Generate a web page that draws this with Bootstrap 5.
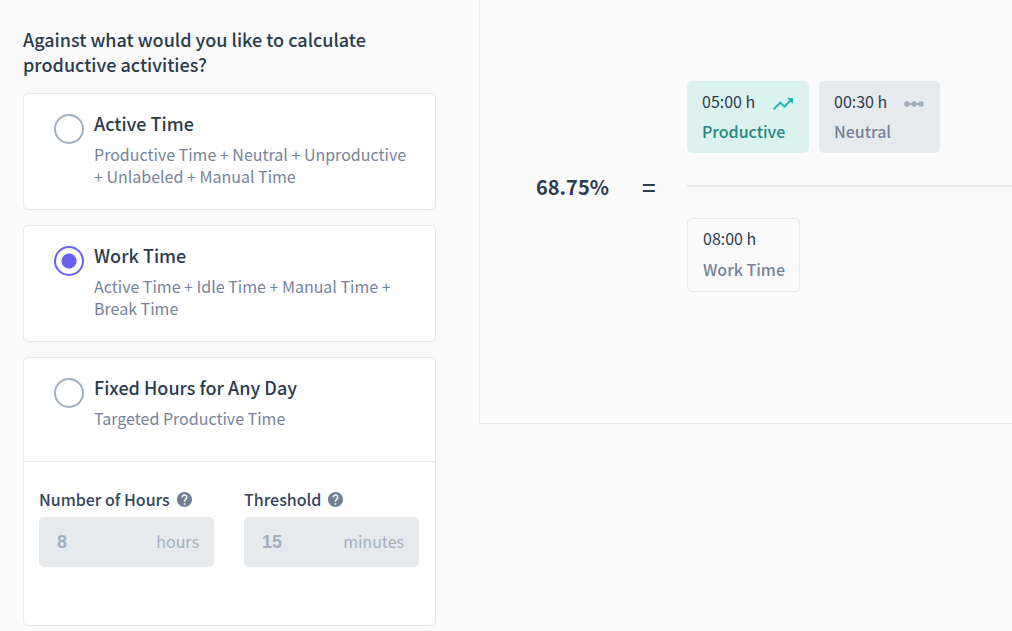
<!DOCTYPE html>
<html lang="en">
<head>
<meta charset="utf-8">
<meta name="viewport" content="width=device-width, initial-scale=1">
<title>Productivity calculation</title>
<link href="https://cdn.jsdelivr.net/npm/bootstrap@5.3.0/dist/css/bootstrap.min.css" rel="stylesheet">
<style>
  body { background: #fafafa; color: #2b3c4d; font-family: "Noto Sans CJK SC", "Noto Sans", sans-serif; font-size: 16px; line-height: 22px; }
  .calc-layout { display: grid; grid-template-columns: 479fr 533fr; align-items: start; }
  .options { padding: 27px 43px 4px 23px; }
  .question { font-size: 18px; line-height: 25px; font-weight: 500; margin-bottom: 16px; }
  .option { border: 1px solid #e6e7e9; border-radius: 5px; background: #fff; margin-bottom: 15px; }
  .option-head { padding: 17px 24px 22px 30px; gap: 10px; }
  .option-head-tall { padding-bottom: 32px; }
  .option-title { font-size: 18px; line-height: 25px; font-weight: 500; margin-bottom: 7px; }
  .option-text { color: #77839a; }
  .option .form-check-input { width: 30px; height: 30px; margin: 3px 0 0; border: 2px solid #a3aebc; background-color: #fff; }
  .option .form-check-input:checked { border-color: #6a60ef; background-image: radial-gradient(circle, #6a60ef 7px, transparent 8px); background-size: auto; }
  .fixed-fields { border-top: 1px solid #e6e7e9; padding: 26px 16px 58px 15px; gap: 30px; }
  .fixed-fields label { font-weight: 500; color: #35455c; }
  .field-label { gap: 7px; }
  .amount { border-radius: 5px; background: #e6eaed; color: #a3aebc; height: 50px; padding: 0 15px 2px 18px; margin-top: 7px; }
  .amount input { min-width: 0; width: 50%; padding: 2px 0 0; border: 0; background: none; color: #a3aebc; font: 700 18px/25px "Liberation Sans", sans-serif; }
  .formula { border-left: 1px solid #e6e7e9; border-bottom: 1px solid #e6e7e9; padding: 81px 0 131px 56px; overflow: hidden; }
  .percent { font-size: 20px; line-height: 25px; font-weight: 700; width: 106px; }
  .equals { font-size: 24px; line-height: 25px; font-weight: 500; width: 45px; }
  .tiles { gap: 10px; }
  .tile { border-radius: 5px; padding: 9px 15px 11px; white-space: nowrap; }
  .tile svg { margin: 5px 1px 0 0; }
  .tile-name { font-weight: 500; margin-top: 8px; }
  .tile-teal { background: #dcf2ef; width: 122px; }
  .tile-teal .tile-name { color: #26877f; }
  .tile-gray { background: #e6eaed; width: 121px; }
  .tile-gray .tile-name, .tile-line .tile-name { color: #77839a; }
  .tile-line { border: 1px solid #e6e7e9; width: 113px; padding-top: 8px; }
  .tile-line .tile-name { margin-top: 9px; }
  .divider { height: 2px; background: #e6eaed; margin: 32px 0 31px; }
</style>
</head>
<body>
<main class="calc-layout">
  <form class="options">
    <h1 class="question">Against what would you like to calculate productive activities?</h1>
    <section class="option">
      <div class="option-head d-flex align-items-start">
        <input class="form-check-input flex-shrink-0" type="radio" name="basis" id="active">
        <label for="active"><span class="option-title d-block">Active Time</span><span class="option-text d-block">Productive Time + Neutral + Unproductive + Unlabeled + Manual Time</span></label>
      </div>
    </section>
    <section class="option">
      <div class="option-head d-flex align-items-start">
        <input class="form-check-input flex-shrink-0" type="radio" name="basis" id="work" checked>
        <label for="work"><span class="option-title d-block">Work Time</span><span class="option-text d-block">Active Time + Idle Time + Manual Time + Break Time</span></label>
      </div>
    </section>
    <section class="option mb-0">
      <div class="option-head option-head-tall d-flex align-items-start">
        <input class="form-check-input flex-shrink-0" type="radio" name="basis" id="fixed">
        <label for="fixed"><span class="option-title d-block">Fixed Hours for Any Day</span><span class="option-text d-block">Targeted Productive Time</span></label>
      </div>
      <div class="fixed-fields d-flex">
        <div class="flex-fill w-50">
          <div class="field-label d-flex align-items-center"><label for="hours">Number of Hours</label>
            <svg width="15" height="15" viewBox="2 2 20 20" fill="#728096" aria-hidden="true"><path d="M12 2C6.48 2 2 6.48 2 12s4.480 10 10 10 10-4.480 10-10S17.520 2 12 2zm1 17h-2v-2h2v2zm2.070-7.750l-.9.920C13.450 12.900 13 13.500 13 15h-2v-.5c0-1.100.45-2.100 1.170-2.830l1.240-1.260c.37-.36.59-.86.59-1.410 0-1.100-.9-2-2-2s-2 .9-2 2H8c0-2.210 1.790-4 4-4s4 1.790 4 4c0 .88-.36 1.680-.93 2.250z"/></svg></div>
          <div class="amount d-flex align-items-center justify-content-between"><input id="hours" type="text" value="8" disabled><span>hours</span></div>
        </div>
        <div class="flex-fill w-50">
          <div class="field-label d-flex align-items-center"><label for="threshold">Threshold</label>
            <svg width="15" height="15" viewBox="2 2 20 20" fill="#728096" aria-hidden="true"><path d="M12 2C6.48 2 2 6.48 2 12s4.480 10 10 10 10-4.480 10-10S17.520 2 12 2zm1 17h-2v-2h2v2zm2.070-7.750l-.9.920C13.450 12.900 13 13.500 13 15h-2v-.5c0-1.100.45-2.100 1.170-2.830l1.240-1.260c.37-.36.59-.86.59-1.410 0-1.100-.9-2-2-2s-2 .9-2 2H8c0-2.210 1.790-4 4-4s4 1.790 4 4c0 .88-.36 1.680-.93 2.250z"/></svg></div>
          <div class="amount d-flex align-items-center justify-content-between"><input id="threshold" type="text" value="15" disabled><span>minutes</span></div>
        </div>
      </div>
    </section>
  </form>
  <section class="formula d-flex align-items-center">
    <div class="percent flex-shrink-0">68.75%</div>
    <div class="equals flex-shrink-0">=</div>
    <div class="flex-fill">
      <div class="tiles d-flex">
        <div class="tile tile-teal">
          <div class="d-flex align-items-center justify-content-between"><span>05:00 h</span>
            <svg width="20" height="12" viewBox="2 6 20 12" fill="#20b8ad" aria-hidden="true"><path d="M16 6l2.290 2.290-4.880 4.880-4-4L2 16.590 3.410 18l6-6 4 4 6.300-6.290L22 12V6z"/></svg></div>
          <div class="tile-name">Productive</div>
        </div>
        <div class="tile tile-gray">
          <div class="d-flex align-items-center justify-content-between"><span>00:30 h</span>
            <svg width="20" height="6" viewBox="0 0 20 6" fill="#a3aebc" aria-hidden="true"><circle cx="3" cy="3" r="2.700"/><circle cx="10" cy="3" r="2.700"/><circle cx="17" cy="3" r="2.700"/><path d="M3 2h14v2H3z"/></svg></div>
          <div class="tile-name">Neutral</div>
        </div>
      </div>
      <div class="divider"></div>
      <div class="tile tile-line"><div>08:00 h</div><div class="tile-name">Work Time</div></div>
    </div>
  </section>
</main>
<script src="https://cdn.jsdelivr.net/npm/bootstrap@5.3.0/dist/js/bootstrap.bundle.min.js"></script>
</body>
</html>
